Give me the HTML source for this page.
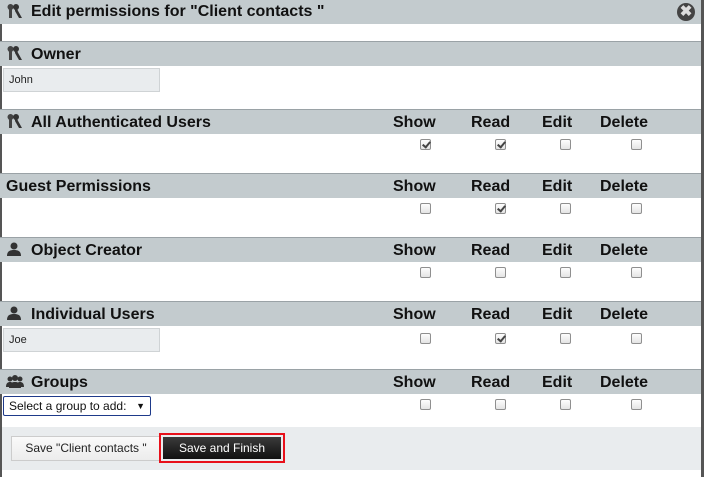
<!DOCTYPE html>
<html><head><style>
*{margin:0;padding:0;box-sizing:border-box}
body{width:704px;height:477px;background:#fff;position:relative;overflow:hidden;font-family:"Liberation Sans",Arial,sans-serif}
.a{position:absolute}
.hdr{position:absolute;left:0;width:701px;height:25px;background:#c3cbce;border-top:1px solid #9aa2a6;font-weight:bold;font-size:16px;color:#111;line-height:25px}
.hdr .t{position:absolute;left:31px;top:0}
.hdr .nt{left:6px}
.cb{position:absolute;width:11px;height:11px;border:1px solid #8f8f8f;border-radius:2px;background:linear-gradient(#fdfdfd,#e4e4e4)}
.cb.k::after{content:"";position:absolute;left:3px;top:0px;width:3px;height:6px;border:solid #444;border-width:0 2px 2px 0;transform:rotate(40deg)}
.inp{position:absolute;left:3px;width:157px;height:24px;background:#e9ecee;border:1px solid #cfd3d5;font-size:11px;color:#222;line-height:22px;padding-left:5px}
</style></head><body>
<div class="a" style="left:0;top:0;width:2px;height:477px;background:#555"></div>
<div class="a" style="left:701px;top:0;width:3px;height:477px;background:#555"></div>
<div class="hdr" style="top:0;border-top:none;height:24px;line-height:24px"><span class="t">Edit permissions for "Client contacts "</span>
<div class="a" style="left:677px;top:3px;width:18px;height:18px;border-radius:50%;background:#444;color:#ddd;font-size:15px;line-height:18px;text-align:center">✖</div></div>

<svg class="a" width="0" height="0"><defs>
<g id="key"><circle cx="3.5" cy="3" r="3" fill="#444"/><path d="M2 5h3v9h-3z" fill="#444"/><circle cx="9" cy="3" r="3" fill="#333"/><path d="M8 5h2l5 9h-3l-4-7z" fill="#333"/></g>
<g id="usr"><circle cx="7" cy="4" r="3.5" fill="#333"/><path d="M0 14c0-5 3-6 7-6s7 1 7 6z" fill="#333"/></g>
<g id="grp"><circle cx="4" cy="5" r="2.5" fill="#333"/><circle cx="14" cy="5" r="2.5" fill="#333"/><circle cx="9" cy="4" r="3" fill="#333"/><path d="M0 13c0-4 2-5 4-5s4 1 4 5z M10 13c0-4 2-5 4-5s4 1 4 5z M3 14c0-5 3-6 6-6s6 1 6 6z" fill="#333"/></g>
</defs></svg>
<svg class="a" style="left:7px;top:4px" width="16" height="15"><use href="#key"/></svg>

<div class="hdr" style="top:41px"><span class="t">Owner</span></div>
<svg class="a" style="left:7px;top:46px" width="16" height="15"><use href="#key"/></svg>
<div class="inp" style="top:68px">John</div>

<div class="hdr" style="top:109px"><span class="t">All Authenticated Users</span></div>
<svg class="a" style="left:7px;top:114px" width="16" height="15"><use href="#key"/></svg>

<div class="hdr" style="top:173px"><span class="t nt">Guest Permissions</span></div>

<div class="hdr" style="top:237px"><span class="t">Object Creator</span></div>
<svg class="a" style="left:7px;top:242px" width="14" height="15"><use href="#usr"/></svg>

<div class="hdr" style="top:301px"><span class="t">Individual Users</span></div>
<svg class="a" style="left:7px;top:306px" width="14" height="15"><use href="#usr"/></svg>
<div class="inp" style="top:328px">Joe</div>

<div class="hdr" style="top:369px"><span class="t">Groups</span></div>
<svg class="a" style="left:6px;top:374px" width="19" height="15"><use href="#grp"/></svg>
<div class="a" style="left:3px;top:396px;width:148px;height:20px;border:1px solid #1e3a8a;border-radius:2px;font-size:12px;line-height:18px;padding-left:5px;color:#111">Select a group to add:<span style="position:absolute;right:5px;font-size:9px">▼</span></div>

<div class="a" style="left:2px;top:427px;width:699px;height:43px;background:#e9ecee"></div>
<div class="a" style="left:11px;top:436px;width:150px;height:25px;border:1px solid #ccc;background:linear-gradient(#fafafa,#ececec);font-size:12px;line-height:23px;text-align:center;color:#222">Save "Client contacts "</div>
<div class="a" style="left:159px;top:433px;width:126px;height:30px;border:2px solid #e8101a;padding:2px"><div style="width:100%;height:100%;background:linear-gradient(#3a3a3a,#111);color:#fff;font-size:12px;line-height:22px;text-align:center">Save and Finish</div></div>

<div id="cols"></div>
<script>
var tops=[109,173,237,301,369];var checks=[[1,1,0,0],[0,1,0,0],[0,0,0,0],[0,1,0,0],[0,0,0,0]];
var cyo=[139,203,267,333,399];var lx=[393,471,542,600];var names=["Show","Read","Edit","Delete"];var cx=[420,495,560,631];
var h="";for(var i=0;i<5;i++){for(var j=0;j<4;j++){h+='<div class="a" style="left:'+lx[j]+'px;top:'+(tops[i]+1)+'px;font-weight:bold;font-size:16px;line-height:25px;color:#111">'+names[j]+'</div>';h+='<div class="cb'+(checks[i][j]?' k':'')+'" style="left:'+cx[j]+'px;top:'+cyo[i]+'px"></div>';}}
document.getElementById("cols").innerHTML=h;
</script>
</body></html>
